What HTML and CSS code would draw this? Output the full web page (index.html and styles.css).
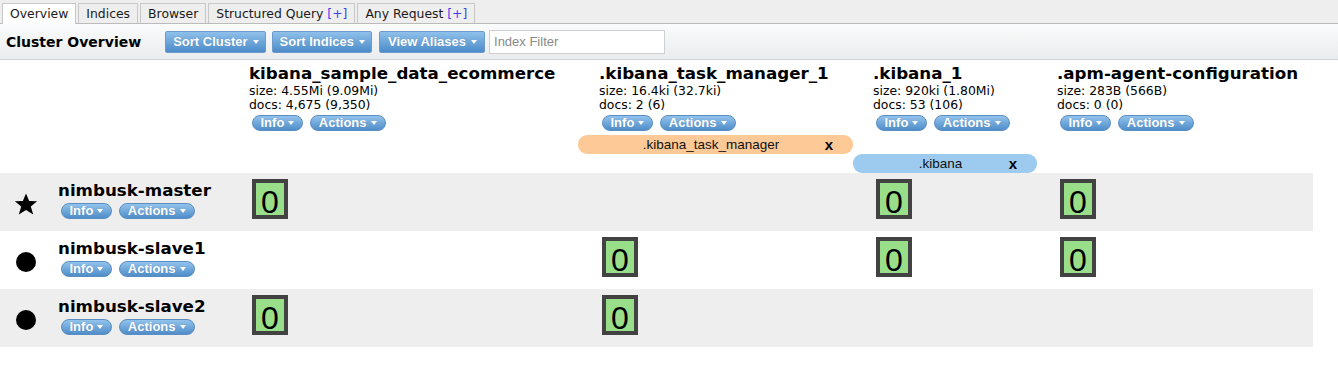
FILE: index.html
```html
<!DOCTYPE html>
<html>
<head>
<meta charset="utf-8">
<title>Cluster Overview</title>
<link rel="stylesheet" href="styles.css">
</head>
<body>
<div class="tabs">
  <div class="tab active">Overview</div>
  <div class="tab">Indices</div>
  <div class="tab">Browser</div>
  <div class="tab">Structured Query <span class="plus">[+]</span></div>
  <div class="tab">Any Request <span class="plus">[+]</span></div>
</div>
<div class="toolbar">
  <h1 class="title">Cluster Overview</h1>
  <button class="btn btn-first">Sort Cluster <span class="caret"></span></button>
  <button class="btn">Sort Indices <span class="caret"></span></button>
  <button class="btn btn-wide">View Aliases <span class="caret"></span></button>
  <input class="filter" type="text" placeholder="Index Filter">
</div>

<div class="cluster">
  <div class="row head-row">
    <div class="spacer"></div>
    <div class="idx">
      <div class="idx-name">kibana_sample_data_ecommerce</div>
      <div class="stat">size: 4.55Mi (9.09Mi)</div>
      <div class="stat">docs: 4,675 (9,350)</div>
      <div class="actions"><span class="sbtn">Info <span class="caret"></span></span><span class="sbtn">Actions <span class="caret"></span></span></div>
    </div>
    <div class="idx">
      <div class="idx-name">.kibana_task_manager_1</div>
      <div class="stat">size: 16.4ki (32.7ki)</div>
      <div class="stat">docs: 2 (6)</div>
      <div class="actions"><span class="sbtn">Info <span class="caret"></span></span><span class="sbtn">Actions <span class="caret"></span></span></div>
    </div>
    <div class="idx">
      <div class="idx-name">.kibana_1</div>
      <div class="stat">size: 920ki (1.80Mi)</div>
      <div class="stat">docs: 53 (106)</div>
      <div class="actions"><span class="sbtn">Info <span class="caret"></span></span><span class="sbtn">Actions <span class="caret"></span></span></div>
    </div>
    <div class="idx">
      <div class="idx-name">.apm-agent-configuration</div>
      <div class="stat">size: 283B (566B)</div>
      <div class="stat">docs: 0 (0)</div>
      <div class="actions"><span class="sbtn">Info <span class="caret"></span></span><span class="sbtn">Actions <span class="caret"></span></span></div>
    </div>
  </div>

  <div class="row alias-row">
    <div class="alias alias-orange col-b"><span class="alias-name">.kibana_task_manager</span><span class="alias-x">x</span></div>
  </div>
  <div class="row alias-row">
    <div class="alias alias-blue col-c"><span class="alias-name">.kibana</span><span class="alias-x">x</span></div>
  </div>

  <div class="row node-row shaded">
    <div class="node-icon"><svg class="star" width="24" height="22" viewBox="0 0 22 20"><polygon points="11,0.3 13.9,7.3 21.2,7.4 15.4,12.2 17.6,19.6 11,15.5 4.4,19.6 6.6,12.2 0.8,7.4 8.1,7.3" fill="#000"/></svg></div>
    <div class="node">
      <div class="node-name">nimbusk-master</div>
      <div class="actions"><span class="sbtn">Info <span class="caret"></span></span><span class="sbtn">Actions <span class="caret"></span></span></div>
    </div>
    <div class="cell"><div class="shard">0</div></div>
    <div class="cell"></div>
    <div class="cell"><div class="shard">0</div></div>
    <div class="cell"><div class="shard">0</div></div>
  </div>

  <div class="row node-row">
    <div class="node-icon"><svg width="22" height="20" viewBox="0 0 22 20"><circle cx="11" cy="10" r="10" fill="#000"/></svg></div>
    <div class="node">
      <div class="node-name">nimbusk-slave1</div>
      <div class="actions"><span class="sbtn">Info <span class="caret"></span></span><span class="sbtn">Actions <span class="caret"></span></span></div>
    </div>
    <div class="cell"></div>
    <div class="cell"><div class="shard">0</div></div>
    <div class="cell"><div class="shard">0</div></div>
    <div class="cell"><div class="shard">0</div></div>
  </div>

  <div class="row node-row shaded">
    <div class="node-icon"><svg width="22" height="20" viewBox="0 0 22 20"><circle cx="11" cy="10" r="10" fill="#000"/></svg></div>
    <div class="node">
      <div class="node-name">nimbusk-slave2</div>
      <div class="actions"><span class="sbtn">Info <span class="caret"></span></span><span class="sbtn">Actions <span class="caret"></span></span></div>
    </div>
    <div class="cell"><div class="shard">0</div></div>
    <div class="cell"><div class="shard">0</div></div>
    <div class="cell"></div>
    <div class="cell"></div>
  </div>
</div>
</body>
</html>
```

FILE: styles.css
```css
* { box-sizing: border-box; }

body {
  margin: 0;
  font-family: "DejaVu Sans", Verdana, sans-serif;
  font-size: 12px;
  color: #000;
  background: #fff;
}

/* tabs */
.tabs {
  display: flex;
  align-items: flex-start;
  gap: 2px;
  height: 24px;
  padding: 3px 0 0 2px;
  background: #eee;
  border-bottom: 1px solid #bbb;
}
.tab {
  height: 20px;
  padding: 0 7px;
  line-height: 20px;
  border: 1px solid #c8c8c8;
  border-bottom: none;
  background: #eee;
  color: #1a1a1a;
  font-size: 12.4px;
  white-space: nowrap;
}
.tab.active {
  background: #fff;
  height: 21px;
}
.plus { color: #3f3ff0; }

/* toolbar */
.toolbar {
  display: flex;
  align-items: center;
  height: 36px;
  padding-left: 6px;
  background: linear-gradient(#fbfcfc, #e9ebed);
  border-bottom: 1px solid #d2d4d6;
}
.title {
  margin: 0 24px 0 0;
  font-size: 14px;
  font-weight: bold;
  color: #000;
  white-space: nowrap;
}
.btn {
  display: inline-flex;
  align-items: center;
  gap: 5px;
  height: 22px;
  margin: 0 0 0 6px;
  padding: 0 6px 0 7px;
  border: 1px solid #6a9bcc;
  border-radius: 2px;
  background: linear-gradient(#8fc0ea, #4c8bc8);
  color: #fff;
  font-family: "Liberation Sans", Arial, sans-serif;
  font-size: 13px;
  font-weight: bold;
  text-shadow: 0 0 1px rgba(40, 80, 130, 0.35);
  white-space: nowrap;
}
.btn-first { margin-left: 0; }
.btn-wide { margin-left: 7px; padding: 0 7px 0 8px; }
.caret {
  display: inline-block;
  width: 0;
  height: 0;
  border-left: 3.5px solid transparent;
  border-right: 3.5px solid transparent;
  border-top: 4px solid #fff;
}
.filter {
  width: 176px;
  height: 24px;
  margin-left: 4px;
  padding: 0 4px;
  border: 1px solid #cfcfcf;
  font-family: "Liberation Sans", Arial, sans-serif;
  font-size: 13px;
  color: #333;
  background: #fff;
}
.filter::placeholder { color: #8a8a8a; }

/* cluster grid */
.cluster { width: 1313px; }
.row {
  display: grid;
  grid-template-columns: 50px 199px 350px 274px 184px 256px;
}
.spacer { grid-column: 1 / 3; }

.idx {
  padding: 3px 0 4px 0;
  white-space: nowrap;
}
.idx-name, .node-name {
  font-size: 16.7px;
  font-weight: bold;
  line-height: 21px;
  white-space: nowrap;
}
.stat {
  font-size: 12.4px;
  line-height: 14px;
}
.actions {
  display: flex;
  gap: 7px;
  margin-top: 3px;
  padding-left: 3px;
}
.sbtn {
  display: inline-flex;
  align-items: center;
  gap: 4px;
  height: 16px;
  padding: 0 8px 0 7.5px;
  border: 1px solid #5a8dc2;
  border-radius: 8px;
  background: linear-gradient(#93c3ec, #4f8dc9);
  color: #fff;
  font-family: "Liberation Sans", Arial, sans-serif;
  font-size: 13px;
  font-weight: bold;
  line-height: 14px;
  text-shadow: 0 0 1px rgba(40, 80, 130, 0.35);
}

/* aliases */
.alias-row { height: 19px; }
.alias {
  display: flex;
  align-items: center;
  height: 19px;
  margin: 0 20px 0 -21px;
  border-radius: 9px;
  font-family: "Liberation Sans", Arial, sans-serif;
}
.col-b { grid-column: 4 / 5; }
.col-c { grid-column: 5 / 6; margin-left: -20px; }
.alias-orange { background: #fdca97; }
.alias-blue { background: #9dcbef; }
.alias-name {
  flex: 1;
  padding-left: 20px;
  text-align: center;
  font-size: 13.5px;
  color: #111;
}
.alias-x {
  width: 29px;
  padding-right: 20px;
  font-size: 15px;
  font-weight: bold;
  text-align: right;
}

/* nodes */
.node-row { height: 58px; }
.node-row.shaded { background: #eee; }
.node-icon {
  display: flex;
  align-items: center;
  justify-content: center;
  padding: 4px 0 0 2px;
}
.node-icon svg { display: block; }
.node {
  padding: 7px 0 0 8px;
}
.node .actions { margin-top: 2px; }
.cell { padding: 6px 0 0 3px; }
.shard {
  width: 36px;
  height: 40px;
  border: 4px solid #424242;
  background: #99df89;
  font-family: "Liberation Sans", Arial, sans-serif;
  font-size: 32px;
  line-height: 38px;
  text-align: center;
  overflow: hidden;
  color: #000;
}
```
